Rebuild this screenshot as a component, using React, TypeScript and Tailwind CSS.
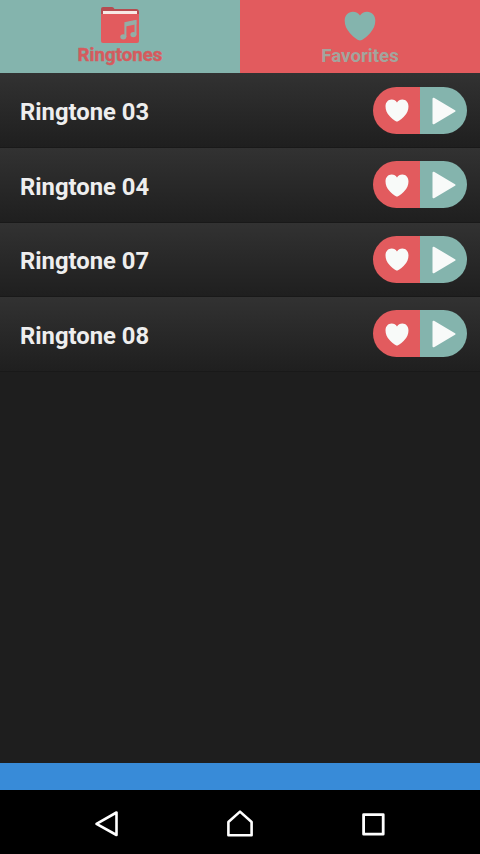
import { useState } from 'react';

interface Ringtone {
  id: number;
  title: string;
}

const ringtones: Ringtone[] = [
  { id: 3, title: 'Ringtone 03' },
  { id: 4, title: 'Ringtone 04' },
  { id: 7, title: 'Ringtone 07' },
  { id: 8, title: 'Ringtone 08' },
];

function FolderIcon() {
  return (
    <svg width="40" height="38" viewBox="0 0 40 38" fill="none">
      <path d="M1 3Q1 1 3 1H12Q13.5 1 14.5 3H36Q39 3 39 6V12H1Z" fill="#b54c50" />
      <path d="M3 5H37V9H3Z" fill="#f7e9e5" />
      <path d="M1 8H39V35Q39 37 37 37H3Q1 37 1 35Z" fill="#e25b5e" />
      <path d="M25.4 31V17L35.5 15V28.8" stroke="#93aea6" strokeWidth="2" />
      <path d="M25.4 16.4L36.4 14.2V18.2L25.4 20.4Z" fill="#93aea6" />
      <ellipse cx="23.3" cy="30.8" rx="3" ry="2.6" fill="#93aea6" />
      <ellipse cx="33.4" cy="28.6" rx="3" ry="2.6" fill="#93aea6" />
    </svg>
  );
}

function HeartIcon({ className }: { className: string }) {
  return (
    <svg className={className} viewBox="0 0 32 30" fill="currentColor" preserveAspectRatio="none">
      <path d="M16 29.5C14 29.5 9.5 26.3 5.8 22C2.5 18.2 .7 14.5 .7 9.8C.7 4.5 4.2 .8 8.8 .8C12 .8 14.6 2.2 16 4.5C17.4 2.2 20 .8 23.2 .8C27.8 .8 31.3 4.5 31.3 9.8C31.3 14.5 29.5 18.2 26.2 22C22.5 26.3 18 29.5 16 29.5Z" />
    </svg>
  );
}

function RingtoneRow({ ringtone }: { ringtone: Ringtone }) {
  return (
    <li className="flex h-[74.6px] items-center justify-between border-b border-[#191919] bg-linear-to-b from-[#323232] to-[#1f1f1f] pr-[13px] pl-5">
      <span className="pt-1 text-[23.8px] leading-7 font-bold text-[#eeeeee]">{ringtone.title}</span>
      <div className="flex h-[47px] w-[94px] overflow-hidden rounded-full text-[#f8faf9]">
        <button aria-label="Favorite" className="flex w-[47px] items-center justify-center bg-[#e25b5e] pt-px">
          <HeartIcon className="h-[23px] w-6" />
        </button>
        <button aria-label="Play" className="flex w-[47px] items-center justify-center bg-[#84b4ad] pt-px">
          <svg width="24" height="28" viewBox="0 0 24 28" fill="currentColor" stroke="currentColor" strokeWidth="2" strokeLinejoin="round">
            <path d="M1.5 1.7L22.5 14L1.5 26.3Z" />
          </svg>
        </button>
      </div>
    </li>
  );
}

export default function App() {
  const [tab, setTab] = useState('ringtones');

  return (
    <div className="flex h-[854px] w-[480px] flex-col overflow-hidden bg-[#1e1e1e] font-['Roboto',sans-serif]">
      {/* Tabs */}
      <div className="flex h-[73.4px] shrink-0">
        <button
          onClick={() => setTab('ringtones')}
          aria-pressed={tab === 'ringtones'}
          className="flex w-1/2 flex-col items-center bg-[#84b4ad] pt-[6px] text-[#d9595c]"
        >
          <FolderIcon />
          <span className="text-[18.7px] leading-[22px] font-bold [-webkit-text-stroke:0.5px_#c96466]">Ringtones</span>
        </button>
        <button
          onClick={() => setTab('favorites')}
          aria-pressed={tab === 'favorites'}
          className="flex w-1/2 flex-col items-center bg-[#e25b5e] pt-[11px] text-[#84b4ad]"
        >
          <HeartIcon className="h-[30px] w-8" />
          <span className="mt-1 text-[18.7px] leading-[22px] font-bold text-[#a3a59d]">Favorites</span>
        </button>
      </div>

      <ul className="flex-1">
        {ringtones.map((ringtone) => (
          <RingtoneRow key={ringtone.id} ringtone={ringtone} />
        ))}
      </ul>

      {/* Banner strip */}
      <div className="h-[27px] shrink-0 bg-[#388bd8]" />

      {/* System navigation */}
      <nav className="flex h-16 shrink-0 items-center bg-black pt-1 text-white">
        <div className="ml-[93px] flex w-7 justify-center">
          <svg width="28" height="28" viewBox="0 0 28 28" fill="none" stroke="currentColor" strokeWidth="2.6" strokeLinejoin="round">
            <path d="M23.5 2.5V25L3.5 13.8Z" />
          </svg>
        </div>
        <div className="ml-[105px] flex w-7 justify-center">
          <svg width="28" height="28" viewBox="0 0 28 28" fill="none" stroke="currentColor" strokeWidth="2.6" strokeLinejoin="round">
            <path d="M2.4 12L14 1.6L25.6 12V25.2H2.4Z" />
          </svg>
        </div>
        <div className="ml-[105px] flex w-7 justify-center">
          <svg width="28" height="28" viewBox="0 0 28 28" fill="none" stroke="currentColor" strokeWidth="2.8" strokeLinejoin="round">
            <path d="M4.6 4.6H24.2V24.2H4.6Z" />
          </svg>
        </div>
      </nav>
    </div>
  );
}
